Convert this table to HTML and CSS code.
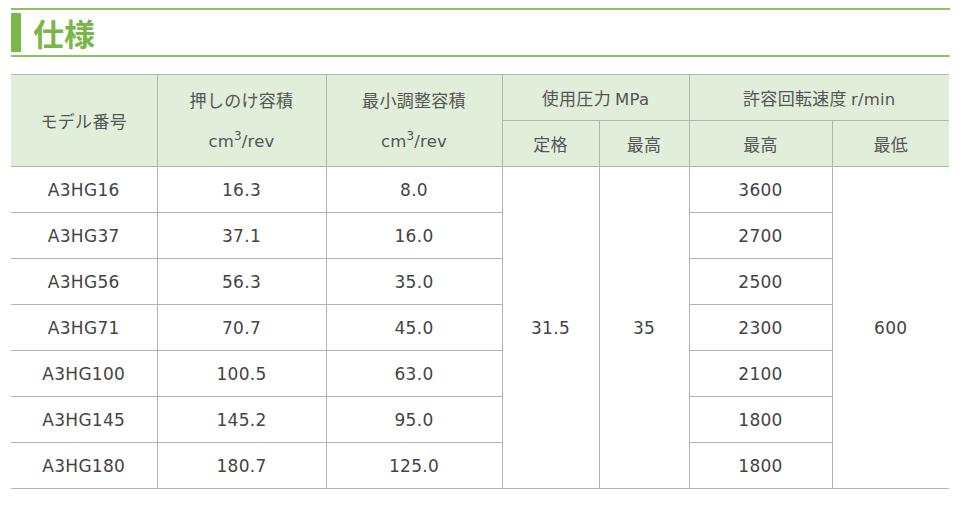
FILE: index.html
```html
<!DOCTYPE html>
<html lang="ja">
<head>
<meta charset="utf-8">
<link rel="stylesheet" href="styles.css">
</head>
<body>
<div class="wrap">
  <h2 class="title"><span class="title-text">仕様</span></h2>
  <table class="spec">
    <colgroup>
      <col class="c1"><col class="c2"><col class="c3"><col class="c4"><col class="c5"><col class="c6"><col class="c7">
    </colgroup>
    <thead>
      <tr>
        <th rowspan="2">モデル番号</th>
        <th rowspan="2" class="two">押しのけ容積<br><span class="unit">cm<sup>3</sup>/rev</span></th>
        <th rowspan="2" class="two">最小調整容積<br><span class="unit">cm<sup>3</sup>/rev</span></th>
        <th colspan="2">使用圧力 <span class="unit">MPa</span></th>
        <th colspan="2">許容回転速度 <span class="unit">r/min</span></th>
      </tr>
      <tr>
        <th>定格</th><th>最高</th><th>最高</th><th>最低</th>
      </tr>
    </thead>
    <tbody>
      <tr><td>A3HG16</td><td>16.3</td><td>8.0</td><td rowspan="7">31.5</td><td rowspan="7">35</td><td>3600</td><td rowspan="7">600</td></tr>
      <tr><td>A3HG37</td><td>37.1</td><td>16.0</td><td>2700</td></tr>
      <tr><td>A3HG56</td><td>56.3</td><td>35.0</td><td>2500</td></tr>
      <tr><td>A3HG71</td><td>70.7</td><td>45.0</td><td>2300</td></tr>
      <tr><td>A3HG100</td><td>100.5</td><td>63.0</td><td>2100</td></tr>
      <tr><td>A3HG145</td><td>145.2</td><td>95.0</td><td>1800</td></tr>
      <tr><td>A3HG180</td><td>180.7</td><td>125.0</td><td>1800</td></tr>
    </tbody>
  </table>
</div>
</body>
</html>
```
FILE: styles.css
```css
html, body {
  margin: 0;
  padding: 0;
  background: #fff;
}
body {
  font-family: "DejaVu Sans", "Noto Sans CJK JP", sans-serif;
  color: #444;
}
.wrap {
  width: 939px;
  margin: 8px 0 0 11px;
}
.title {
  margin: 0;
  border-top: 2px solid #8cc260;
  border-bottom: 2px solid #8cc260;
  padding: 3px 0 3px 0;
  height: 39px;
  display: flex;
  align-items: center;
}
.title-text {
  display: flex;
  align-items: center;
  height: 39px;
  border-left: 10px solid #7ab648;
  padding-left: 12px;
  font-family: "Noto Sans CJK JP", sans-serif;
  font-weight: bold;
  font-size: 31px;
  color: #7ab648;
}
.spec {
  margin-top: 17px;
  width: 938px;
  border-collapse: collapse;
  table-layout: fixed;
}
.c1 { width: 146px; }
.c2 { width: 169px; }
.c3 { width: 176px; }
.c4 { width: 97px; }
.c5 { width: 90px; }
.c6 { width: 143px; }
.c7 { width: 117px; }
.spec th, .spec td {
  border: 1px solid #b3b3b3;
  text-align: center;
  vertical-align: middle;
  padding: 0;
  height: 45px;
  font-weight: normal;
}
.spec th {
  background: #e1eed9;
  font-family: "Noto Sans CJK JP", sans-serif;
  font-size: 17px;
  letter-spacing: 0.3px;
  color: #555;
}
.spec th .unit {
  font-family: "DejaVu Sans", sans-serif;
  font-size: 16.5px;
  letter-spacing: 0.2px;
}
.spec th.two {
  line-height: 40px;
}
.spec sup {
  font-size: 12px;
  line-height: 0;
  vertical-align: 7px;
}
.spec tr > :first-child { border-left: none; }
.spec tr > :last-child { border-right: none; }
.spec td {
  font-family: "DejaVu Sans", sans-serif;
  font-size: 17px;
  letter-spacing: 0.3px;
  color: #444;
}
```
